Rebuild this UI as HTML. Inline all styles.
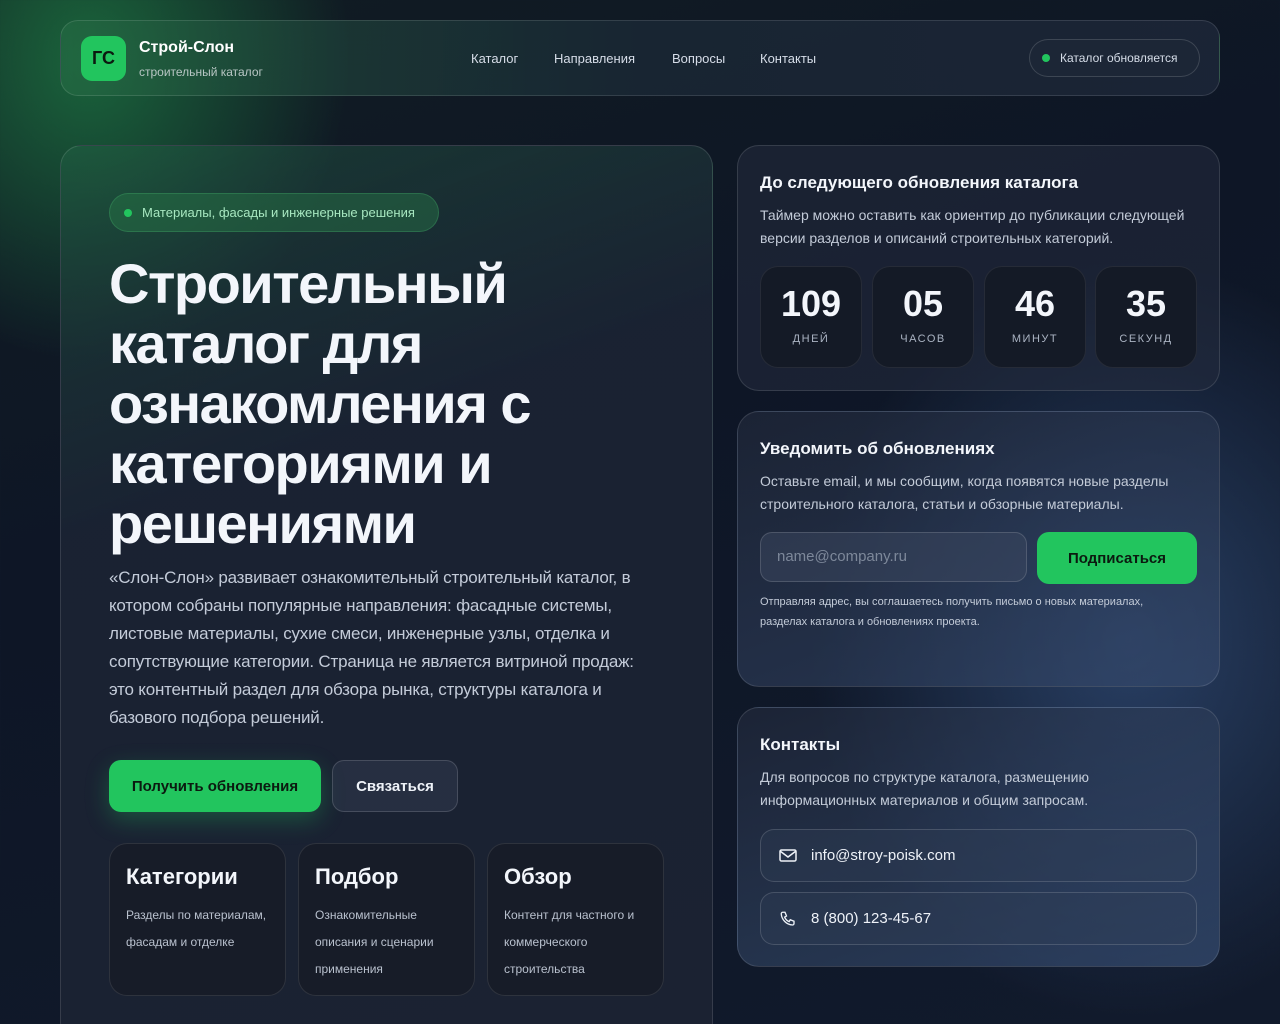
<!DOCTYPE html>
<html><head><meta charset="utf-8"><style>
*{box-sizing:border-box;margin:0;padding:0}
html,body{width:1280px;height:1024px;overflow:hidden}
body{font-family:"Liberation Sans","DejaVu Sans",sans-serif;color:#e8edf5;
background:radial-gradient(ellipse 260px 300px at 90px 60px,rgba(34,160,80,.55),transparent 100%),
radial-gradient(ellipse 320px 380px at 1130px 640px,rgba(70,110,170,.45),transparent 100%),
linear-gradient(160deg,#111c22 0%,#0e1626 40%,#111a2c 100%);position:relative}
.card{position:absolute;border:1px solid rgba(255,255,255,.12);border-radius:22px;background:rgba(36,44,62,.55)}
.nav{left:60px;top:20px;width:1160px;height:76px;border-radius:18px;background:linear-gradient(90deg,rgba(40,110,70,.5),rgba(30,45,60,.6) 50%,rgba(35,45,65,.6))}
.logo{position:absolute;left:20px;top:15px;width:45px;height:45px;border-radius:11px;background:#22c55e;color:#0b1a10;font-weight:bold;font-size:18px;display:flex;align-items:center;justify-content:center}
.bt{position:absolute;left:78px;top:18px;font-weight:bold;font-size:16px;color:#fff}
.bs{position:absolute;left:78px;top:44px;font-size:12px;color:#b8c6c4}
.links{position:absolute;top:30px;font-size:13px;color:#d6dde8}
.pill{position:absolute;border-radius:20px;border:1px solid rgba(255,255,255,.15);font-size:12px;display:flex;align-items:center}
.dot{width:8px;height:8px;border-radius:50%;background:#22c55e;margin-right:10px}
h1{position:absolute;left:48px;top:108px;font-size:56px;line-height:60px;font-weight:bold;color:#f3f6fb;letter-spacing:-1.5px}
.p{position:absolute;font-size:17px;line-height:28px;color:#c3cbd8}
.btn{position:absolute;border-radius:12px;font-weight:bold;font-size:15px;display:flex;align-items:center;justify-content:center}
.mini{position:absolute;top:843px;width:177px;height:153px;border-radius:18px;border:1px solid rgba(255,255,255,.1);background:#171c28;padding:20px 16px}
.mini b{display:block;font-size:22px;color:#f3f6fb;margin-bottom:12px}
.mini div{font-size:12px;line-height:27px;color:#b9c1ce}
h3{position:absolute;left:22px;font-size:17px;color:#f3f6fb}
.t{position:absolute;top:120px;width:102px;height:102px;border-radius:18px;background:#141a26;border:1px solid rgba(255,255,255,.08);text-align:center}
.t b{display:block;font-size:36px;margin-top:16px;color:#f3f6fb}
.t span{display:block;font-size:11px;letter-spacing:1.5px;color:#aab3c2;margin-top:8px}
.row{position:absolute;left:22px;width:437px;height:53px;border-radius:14px;border:1px solid rgba(255,255,255,.15);background:rgba(50,62,85,.35);display:flex;align-items:center;padding-left:18px;font-size:15px;color:#eef2f8}
.row svg{margin-right:14px}
</style></head><body>
<div class="card nav">
 <div class="logo">ГС</div><div class="bt">Строй-Слон</div><div class="bs">строительный каталог</div>
 <div class="links" style="left:410px">Каталог</div><div class="links" style="left:493px">Направления</div><div class="links" style="left:611px">Вопросы</div><div class="links" style="left:699px">Контакты</div>
 <div class="pill" style="left:968px;top:18px;height:38px;width:171px;padding:0 12px;color:#d6dde8;background:rgba(30,40,55,.5)"><div class="dot"></div>Каталог обновляется</div>
</div>
<div class="card" style="left:60px;top:145px;width:653px;height:900px;background:linear-gradient(160deg,rgba(35,100,70,.45),rgba(30,38,55,.75) 35%,rgba(30,36,52,.8))">
 <div class="pill" style="left:48px;top:47px;height:39px;width:330px;padding:0 14px;font-size:13px;color:#a7e7c0;background:rgba(40,120,70,.45);border-color:rgba(80,200,120,.25)"><div class="dot"></div>Материалы, фасады и инженерные решения</div>
 <h1>Строительный<br>каталог для<br>ознакомления с<br>категориями и<br>решениями</h1>
 <div class="p" style="left:48px;top:418px;width:552px;letter-spacing:-0.2px">«Слон-Слон» развивает ознакомительный строительный каталог, в котором собраны популярные направления: фасадные системы, листовые материалы, сухие смеси, инженерные узлы, отделка и сопутствующие категории. Страница не является витриной продаж: это контентный раздел для обзора рынка, структуры каталога и базового подбора решений.</div>
 <div class="btn" style="left:48px;top:614px;width:212px;height:52px;background:#22c55e;color:#0b1a10;box-shadow:0 8px 24px rgba(34,197,94,.3)">Получить обновления</div>
 <div class="btn" style="left:271px;top:614px;width:126px;height:52px;border:1px solid rgba(255,255,255,.15);background:rgba(50,60,80,.5);color:#eef2f8">Связаться</div>
</div>
<div class="mini" style="left:109px"><b>Категории</b><div>Разделы по материалам, фасадам и отделке</div></div>
<div class="mini" style="left:298px"><b>Подбор</b><div>Ознакомительные описания и сценарии применения</div></div>
<div class="mini" style="left:487px"><b>Обзор</b><div>Контент для частного и коммерческого строительства</div></div>

<div class="card" style="left:737px;top:145px;width:483px;height:246px">
 <h3 style="top:27px">До следующего обновления каталога</h3>
 <div class="p" style="left:22px;top:58px;font-size:14px;line-height:23px;width:445px">Таймер можно оставить как ориентир до публикации следующей версии разделов и описаний строительных категорий.</div>
 <div class="t" style="left:22px"><b>109</b><span>ДНЕЙ</span></div>
 <div class="t" style="left:134px"><b>05</b><span>ЧАСОВ</span></div>
 <div class="t" style="left:246px"><b>46</b><span>МИНУТ</span></div>
 <div class="t" style="left:357px"><b>35</b><span>СЕКУНД</span></div>
</div>
<div class="card" style="left:737px;top:411px;width:483px;height:276px;background:linear-gradient(160deg,rgba(36,44,62,.6),rgba(55,75,110,.6))">
 <h3 style="top:27px">Уведомить об обновлениях</h3>
 <div class="p" style="left:22px;top:58px;font-size:14px;line-height:23px;width:445px">Оставьте email, и мы сообщим, когда появятся новые разделы строительного каталога, статьи и обзорные материалы.</div>
 <div style="position:absolute;left:22px;top:120px;width:267px;height:50px;border-radius:12px;border:1px solid rgba(255,255,255,.15);background:rgba(60,72,95,.5);padding:15px 16px;font-size:15px;color:#7d889a">name@company.ru</div>
 <div class="btn" style="left:299px;top:120px;width:160px;height:52px;background:#22c55e;color:#0b1a10">Подписаться</div>
 <div class="p" style="left:22px;top:180px;font-size:11px;line-height:20px;width:425px">Отправляя адрес, вы соглашаетесь получить письмо о новых материалах, разделах каталога и обновлениях проекта.</div>
</div>
<div class="card" style="left:737px;top:707px;width:483px;height:260px;background:linear-gradient(160deg,rgba(36,44,62,.6),rgba(60,85,125,.6))">
 <h3 style="top:27px">Контакты</h3>
 <div class="p" style="left:22px;top:58px;font-size:14px;line-height:23px;width:445px">Для вопросов по структуре каталога, размещению информационных материалов и общим запросам.</div>
 <div class="row" style="top:121px"><svg width="18" height="14" viewBox="0 0 18 14" fill="none" stroke="#eef2f8" stroke-width="1.5"><rect x="1" y="1" width="16" height="11" rx="1.5"/><path d="M1 2l8 6 8-6"/></svg>info@stroy-poisk.com</div>
 <div class="row" style="top:184px"><svg width="18" height="18" viewBox="0 0 24 24" fill="none" stroke="#eef2f8" stroke-width="1.8"><path d="M5 3h3l2 5-2.5 1.5a11 11 0 0 0 6 6L15 13l5 2v3a2 2 0 0 1-2 2A16 16 0 0 1 3 5a2 2 0 0 1 2-2z"/></svg>8 (800) 123-45-67</div>
</div>
</body></html>
